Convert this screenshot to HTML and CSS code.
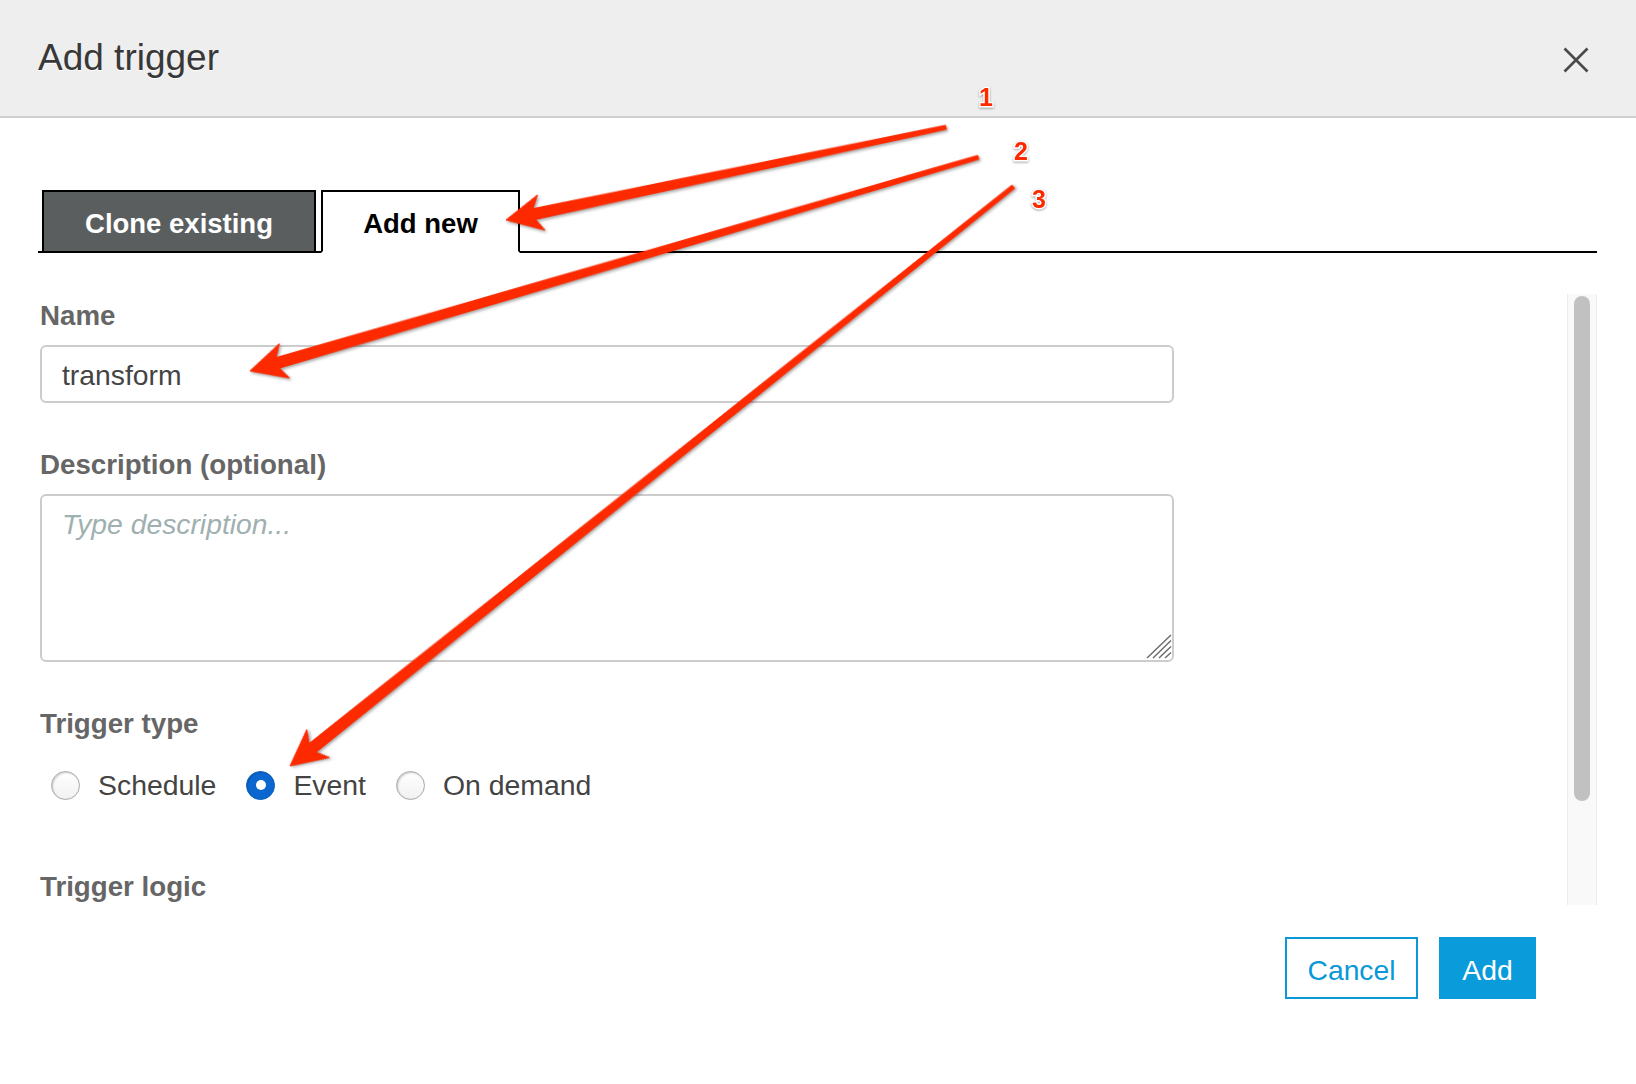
FILE: index.html
```html
<!DOCTYPE html>
<html lang="en">
<head>
<meta charset="utf-8">
<title>Add trigger</title>
<link rel="stylesheet" href="styles.css">
</head>
<body>
<div class="page">
  <header class="header">
    <h1 class="title">Add trigger</h1>
    <svg class="close" width="26" height="26" viewBox="0 0 26 26">
      <path d="M1.5 1.5 L24.5 24.5 M24.5 1.5 L1.5 24.5" stroke="#4a4a4a" stroke-width="2.6" fill="none"/>
    </svg>
  </header>
  <main class="content">
    <div class="tabs">
      <div class="tab tab-dark">Clone existing</div>
      <div class="tab tab-active">Add new</div>
    </div>
    <div class="scroll">
      <div class="form">
        <div class="label label-name">Name</div>
        <div class="input">transform</div>
        <div class="label label-gap">Description (optional)</div>
        <div class="textarea">
          <span class="placeholder">Type description...</span>
          <svg class="grip" width="26" height="26" viewBox="0 0 26 26">
            <path d="M1 24 L25 1 M7 24 L25 6.5 M13 24 L25 12.5 M19 24 L25 18.5" stroke="#6a6a6a" stroke-width="1.4" fill="none"/>
          </svg>
        </div>
        <div class="label label-gap">Trigger type</div>
        <div class="radios">
          <div class="radio-item"><span class="radio"></span><span>Schedule</span></div>
          <div class="radio-item"><span class="radio checked"></span><span>Event</span></div>
          <div class="radio-item"><span class="radio"></span><span>On demand</span></div>
        </div>
        <div class="label label-logic">Trigger logic</div>
      </div>
      <div class="scrollbar"><div class="thumb"></div></div>
    </div>
    <div class="footer">
      <button class="btn btn-cancel">Cancel</button>
      <button class="btn btn-add">Add</button>
    </div>
  </main>
  <svg class="annotations" width="1636" height="1084" viewBox="0 0 1636 1084">
    <g class="arrow">
      <polygon transform="translate(506 220) rotate(-11.9)" points="0,0 36,-18 29,-5.5 449.7,-2 449.7,2 29,5.5 36,18"/>
      <polygon transform="translate(250 371) rotate(-16.35)" points="0,0 36,-18 29,-5.5 759,-2 759,2 29,5.5 36,18"/>
      <polygon transform="translate(290 766) rotate(-38.69)" points="0,0 36,-18 29,-5.5 926.7,-2 926.7,2 29,5.5 36,18"/>
    </g>
    <g class="nums">
      <text x="986" y="106">1</text>
      <text x="1021" y="160">2</text>
      <text x="1039" y="208">3</text>
    </g>
  </svg>
</div>
</body>
</html>
```

FILE: styles.css
```css
body {
  margin: 0;
  background: #fff;
  font-family: "Liberation Sans", Arial, Helvetica, sans-serif;
}

.page {
  position: relative;
  width: 1636px;
  height: 1084px;
  overflow: hidden;
}

.header {
  height: 116px;
  background: #eeeeee;
  border-bottom: 2px solid #cfcfcf;
  display: flex;
  align-items: center;
  justify-content: space-between;
  padding: 0 47px 0 38px;
}

.title {
  margin: 0;
  font-size: 37px;
  font-weight: normal;
  line-height: 44px;
  color: #383838;
  text-shadow: 0 1px 0 #fff;
}

.close {
  margin-top: 3px;
}

.content {
  padding: 72px 39px 0 38px;
}

.tabs {
  display: flex;
  align-items: flex-end;
  gap: 5px;
  padding-left: 4px;
  height: 61px;
  border-bottom: 2px solid #000;
}

.tab {
  box-sizing: border-box;
  height: 63px;
  margin-bottom: -2px;
  border: 2px solid #000;
  padding-top: 4px;
  display: flex;
  align-items: center;
  justify-content: center;
  font-size: 27.5px;
  font-weight: bold;
}

.tab-dark {
  width: 274px;
  background: #5b5e5f;
  color: #fff;
}

.tab-active {
  width: 199px;
  background: #fff;
  color: #000;
  border-bottom-color: #fff;
}

.scroll {
  display: flex;
  height: 611px;
  margin-top: 41px;
  margin-left: 2px;
}

.form {
  width: 1134px;
  overflow: hidden;
}

.label {
  font-size: 27.7px;
  font-weight: bold;
  line-height: 32px;
  color: #666;
}

.label-name {
  margin-top: 6px;
}

.label-gap {
  margin-top: 46px;
}

.label-logic {
  margin-top: 70px;
}

.input {
  box-sizing: border-box;
  margin-top: 13px;
  height: 58px;
  border: 2px solid #cccccc;
  border-radius: 6px;
  padding: 3px 0 0 20px;
  font-size: 28.3px;
  line-height: 51px;
  color: #444;
}

.textarea {
  position: relative;
  box-sizing: border-box;
  margin-top: 13px;
  height: 168px;
  border: 2px solid #cccccc;
  border-radius: 6px;
  padding: 12px 20px 0;
}

.placeholder {
  font-size: 28.3px;
  line-height: 32px;
  font-style: italic;
  color: #9fb0b0;
}

.grip {
  position: absolute;
  right: 0;
  bottom: 0;
}

.radios {
  margin-top: 29px;
  height: 32px;
  display: flex;
  align-items: center;
  gap: 30px;
  padding-left: 11px;
}

.radio-item {
  display: flex;
  align-items: center;
  gap: 18px;
  font-size: 28.4px;
  color: #444;
}

.radio {
  position: relative;
  box-sizing: border-box;
  width: 29px;
  height: 29px;
  border-radius: 50%;
  border: 1.5px solid #a8a8a8;
  background: linear-gradient(#ffffff, #f1f1f1);
  box-shadow: inset 1px 1px 2px rgba(0, 0, 0, 0.2);
}

.radio.checked {
  background: #0b67cf;
  border-color: #0a5fbf;
  box-shadow: inset 1px 1px 1px rgba(0, 0, 0, 0.15);
}

.radio.checked::after {
  content: "";
  position: absolute;
  left: 50%;
  top: 50%;
  width: 10px;
  height: 10px;
  margin: -5px 0 0 -5px;
  border-radius: 50%;
  background: #fff;
}

.scrollbar {
  margin-left: auto;
  width: 28px;
  background: #f9f9f9;
  border-left: 1px solid #ececec;
  border-right: 1px solid #ececec;
}

.thumb {
  width: 16px;
  height: 505px;
  margin: 2px auto 0;
  border-radius: 8px;
  background: #c1c1c1;
}

.footer {
  display: flex;
  justify-content: flex-end;
  gap: 21px;
  margin-top: 32px;
  padding-right: 61px;
}

.btn {
  box-sizing: border-box;
  height: 62px;
  padding: 4px 0 0;
  font-family: inherit;
  font-size: 28.3px;
}

.btn-cancel {
  width: 133px;
  border: 2px solid #0a98d8;
  background: #fff;
  color: #0a98d8;
}

.btn-add {
  width: 97px;
  border: 0;
  background: #0a9bdb;
  color: #fff;
}

.annotations {
  position: absolute;
  left: 0;
  top: 0;
  pointer-events: none;
}

.arrow polygon {
  fill: #fd2a00;
  stroke: #fd2a00;
  stroke-width: 1;
  stroke-linejoin: round;
  filter: drop-shadow(1px 2px 1.5px rgba(0, 0, 0, 0.35));
}

.nums text {
  font-family: "Liberation Sans", Arial, sans-serif;
  font-weight: bold;
  font-size: 25px;
  text-anchor: middle;
  fill: #fd2a00;
  stroke: #fff;
  stroke-width: 3px;
  paint-order: stroke;
  filter: drop-shadow(0 1px 1px rgba(0, 0, 0, 0.35));
}
```
